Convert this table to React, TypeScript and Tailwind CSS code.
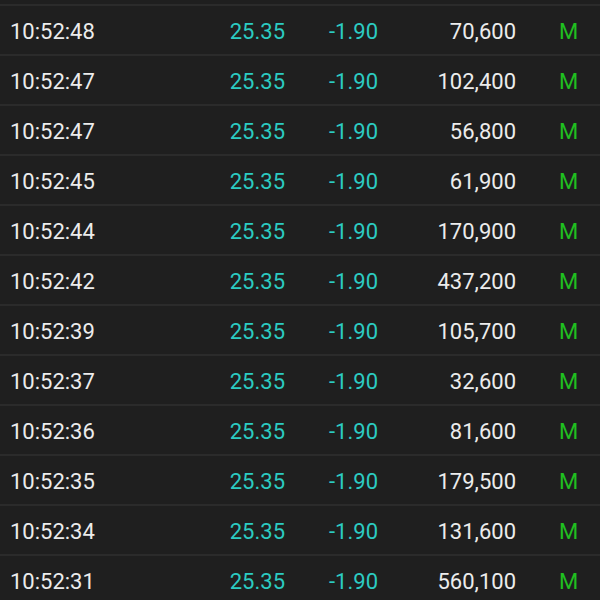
const trades = [
  { time: '10:52:48', vol: '70,600' },
  { time: '10:52:47', vol: '102,400' },
  { time: '10:52:47', vol: '56,800' },
  { time: '10:52:45', vol: '61,900' },
  { time: '10:52:44', vol: '170,900' },
  { time: '10:52:42', vol: '437,200' },
  { time: '10:52:39', vol: '105,700' },
  { time: '10:52:37', vol: '32,600' },
  { time: '10:52:36', vol: '81,600' },
  { time: '10:52:35', vol: '179,500' },
  { time: '10:52:34', vol: '131,600' },
  { time: '10:52:31', vol: '560,100' },
];

export default function App() {
  return (
    <div className="w-[600px] h-[600px] overflow-hidden bg-[#1f1f1f] pt-1 font-['Roboto',sans-serif] text-[22px]">
      {trades.map((t, i) => (
        <div
          key={i}
          className="grid grid-cols-[200px_85px_93px_138px_1fr] items-center h-[50px] pt-[2px] border-t-2 border-[#2b2b2b]"
        >
          <span className="pl-[10px] text-[#ececec]">{t.time}</span>
          <span className="text-right text-[#2ccbc2]">25.35</span>
          <span className="text-right text-[#2ccbc2]">-1.90</span>
          <span className="text-right text-[#ececec]">{t.vol}</span>
          <span className="pl-[43px] text-[#20c020]">M</span>
        </div>
      ))}
    </div>
  );
}
